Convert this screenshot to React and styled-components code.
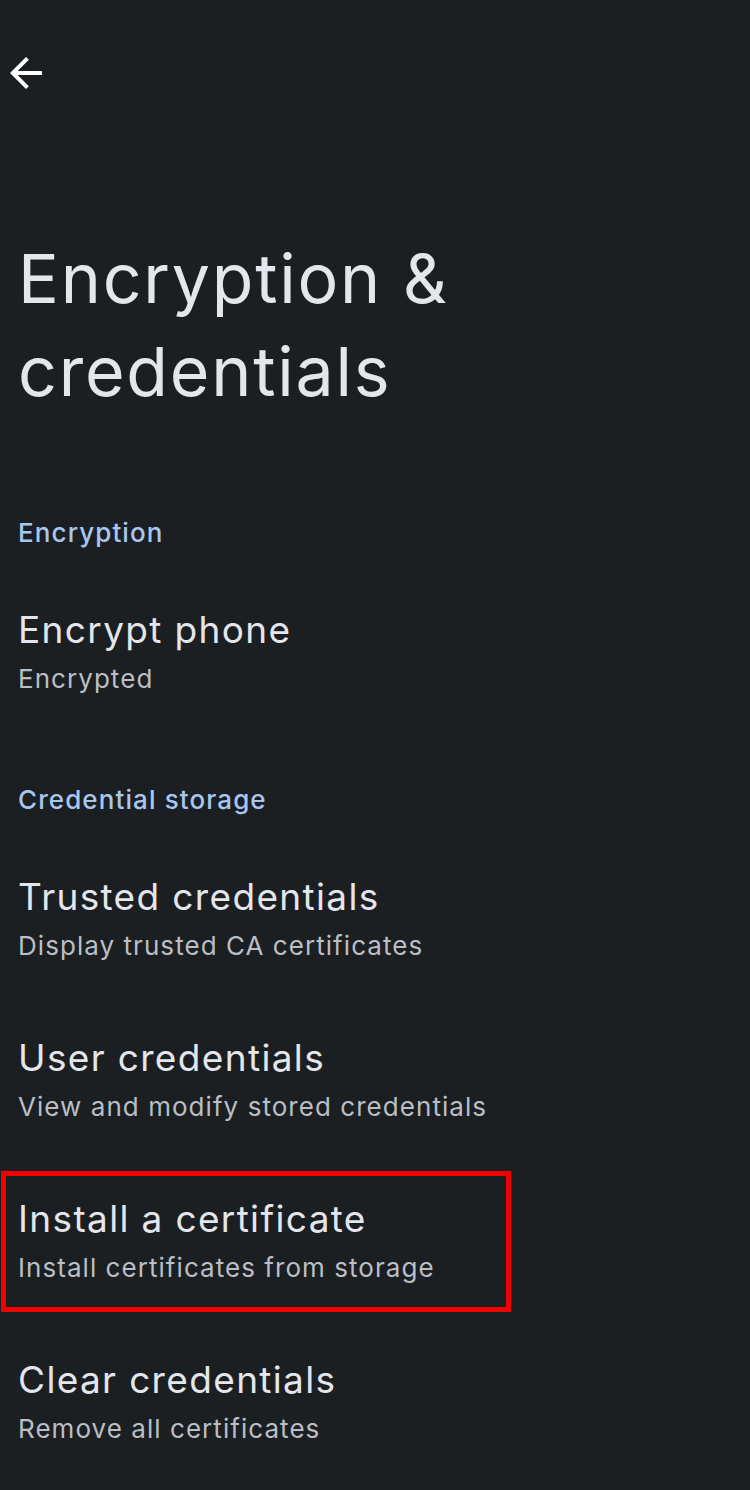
import React from "react";
import styled, { createGlobalStyle } from "styled-components";

const Global = createGlobalStyle`
  html, body { margin: 0; padding: 0; background: #1b1f22; }
  body { font-family: Inter, "Noto Sans", sans-serif; -webkit-font-smoothing: antialiased; }
`;

const Page = styled.div`
  width: 750px;
  min-height: 1490px;
  background: #1b1f22;
  display: flex;
  flex-direction: column;
`;

const TopBar = styled.div`
  height: 146px;
  display: flex;
  align-items: flex-start;
  padding: 49px 0 0 2px;
  box-sizing: border-box;
`;

const BackButton = styled.button`
  width: 48px;
  height: 48px;
  padding: 0;
  border: none;
  background: transparent;
  color: #ffffff;
  display: flex;
  align-items: center;
  justify-content: center;
`;

const Title = styled.h1`
  margin: 86px 0 46px;
  padding: 0 18px;
  font-size: 68px;
  line-height: 93px;
  font-weight: 400;
  color: #e4e6eb;
  letter-spacing: 1.8px;
`;

const SectionHeader = styled.div`
  padding: 51px 18px 19px;
  font-size: 26px;
  line-height: 36px;
  color: #a8c7f0;
  font-weight: 500;
  letter-spacing: 1.1px;
`;

const Item = styled.div`
  position: relative;
  padding: 36px 18px 34px;
  display: flex;
  flex-direction: column;
  gap: 7px;
`;

const ItemTitle = styled.div`
  font-size: 37px;
  line-height: 48px;
  color: #e4e6eb;
  letter-spacing: 1.35px;
`;

const ItemSub = styled.div`
  font-size: 26px;
  line-height: 36px;
  color: #babec5;
  letter-spacing: 1.05px;
`;

const Highlight = styled.div`
  position: absolute;
  left: 1px;
  top: 12px;
  width: 510px;
  height: 141px;
  border: 5px solid #f00000;
  box-sizing: border-box;
  pointer-events: none;
`;

const ArrowBack = () => (
  <svg width="48" height="48" viewBox="0 0 24 24" fill="currentColor">
    <path d="M20 11H7.83l5.59-5.59L12 4l-8 8 8 8 1.41-1.41L7.83 13H20v-2z" />
  </svg>
);

const Row = ({ title, sub, highlighted }) => (
  <Item>
    <ItemTitle>{title}</ItemTitle>
    <ItemSub>{sub}</ItemSub>
    {highlighted && <Highlight />}
  </Item>
);

export default function App() {
  return (
    <Page>
      <Global />
      <TopBar>
        <BackButton aria-label="Back">
          <ArrowBack />
        </BackButton>
      </TopBar>
      <Title>
        Encryption &amp;
        <br />
        credentials
      </Title>
      <SectionHeader>Encryption</SectionHeader>
      <Row title="Encrypt phone" sub="Encrypted" />
      <SectionHeader>Credential storage</SectionHeader>
      <Row title="Trusted credentials" sub="Display trusted CA certificates" />
      <Row title="User credentials" sub="View and modify stored credentials" />
      <Row title="Install a certificate" sub="Install certificates from storage" highlighted />
      <Row title="Clear credentials" sub="Remove all certificates" />
    </Page>
  );
}
